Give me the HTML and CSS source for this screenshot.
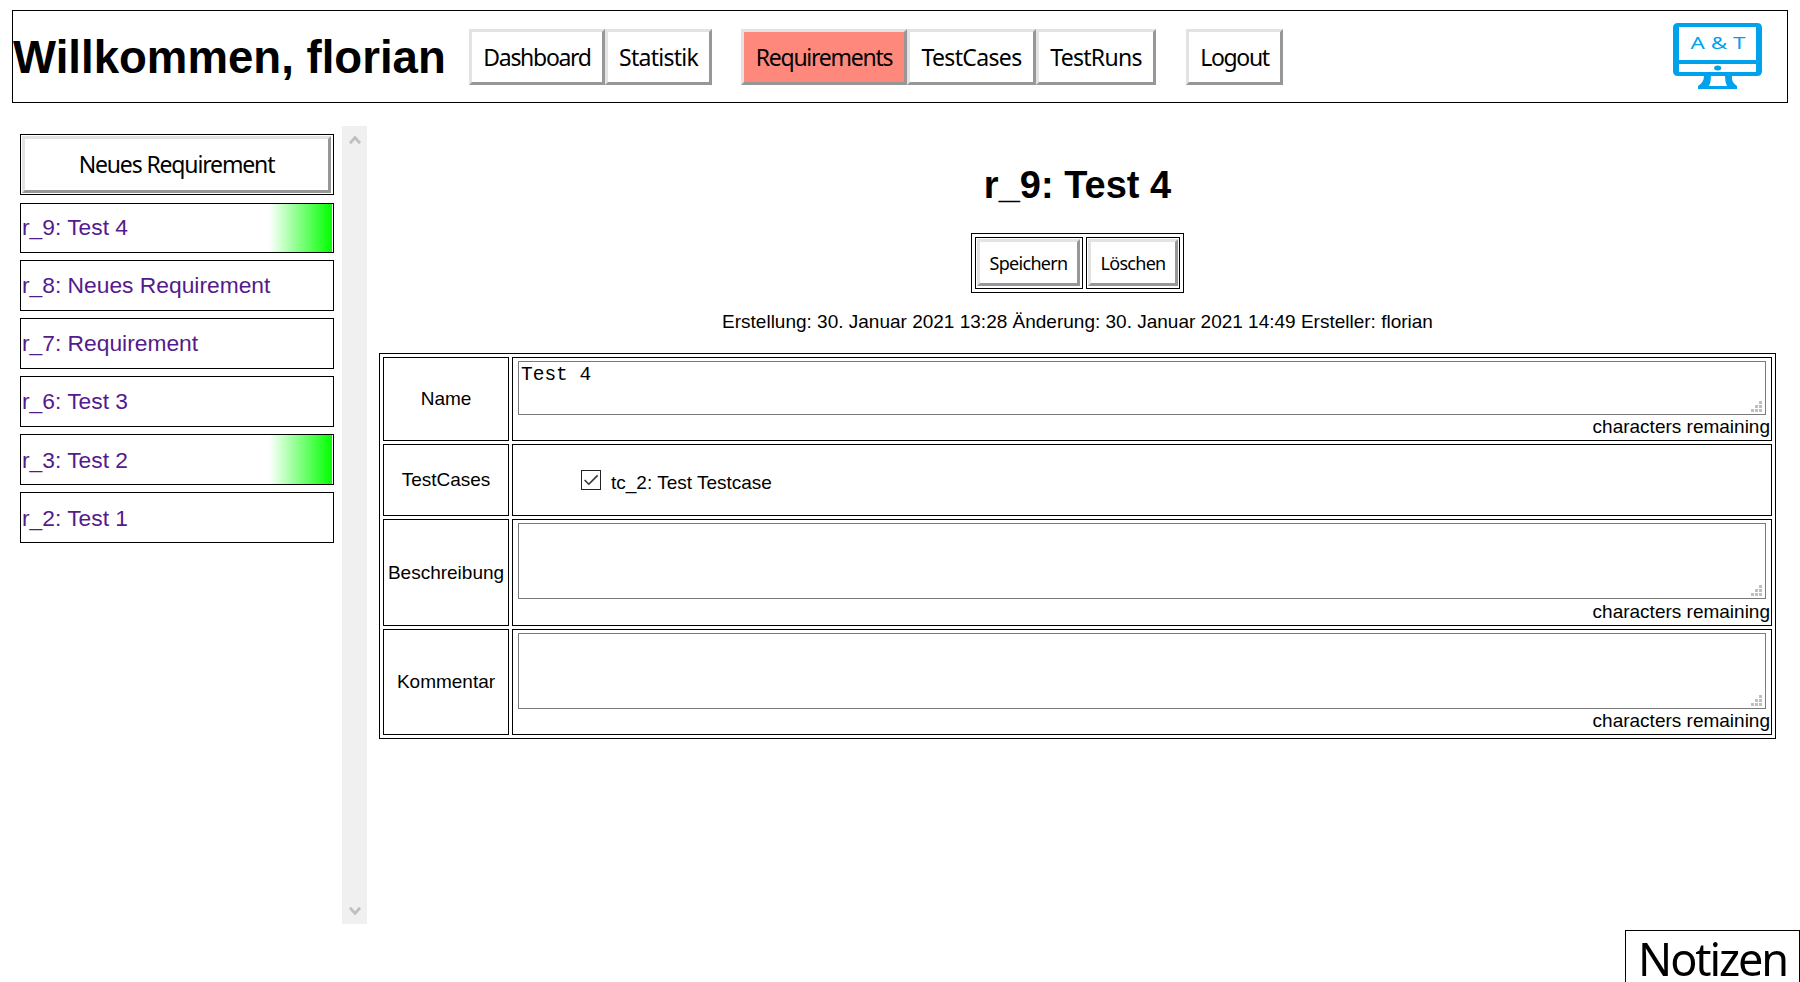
FILE: index.html
```html
<!DOCTYPE html>
<html lang="de">
<head>
<meta charset="utf-8">
<title>Requirements</title>
<link rel="stylesheet" href="styles.css">
</head>
<body>
<header class="topbar">
  <h1 class="welcome">Willkommen, florian</h1>
  <nav class="nav">
    <div class="nav-group"><button class="btn w-dash">Dashboard</button><button class="btn w-stat">Statistik</button></div>
    <div class="nav-group"><button class="btn w-req active">Requirements</button><button class="btn w-cases">TestCases</button><button class="btn w-runs">TestRuns</button></div>
    <div class="nav-group last"><button class="btn w-logout">Logout</button></div>
  </nav>
  <svg class="logo" width="90" height="66" viewBox="0 0 90 66">
    <path fill="#00a2ed" fill-rule="evenodd" d="M5 0H84Q89 0 89 5V48Q89 53 84 53H59Q58 59 64 63V66H25V63Q31 59 31 53H5Q0 53 0 48V5Q0 0 5 0ZM6 4V37H83V4ZM6 41V49H83V41ZM38 53Q38 59 36 63H54Q52 59 52 53Z"/>
    <ellipse cx="44.7" cy="45" rx="3.6" ry="2.5" fill="#00a2ed"/>
    <text class="logo-text" x="17.5" y="26" textLength="55" lengthAdjust="spacingAndGlyphs">A &amp; T</text>
  </svg>
</header>
<div class="content">
  <aside class="sidebar">
    <div class="list">
      <div class="new-box"><button class="btn new-btn">Neues Requirement</button></div>
      <a class="item first done">r_9: Test 4</a>
      <a class="item">r_8: Neues Requirement</a>
      <a class="item">r_7: Requirement</a>
      <a class="item">r_6: Test 3</a>
      <a class="item low done">r_3: Test 2</a>
      <a class="item low">r_2: Test 1</a>
    </div>
    <div class="scrollbar">
      <svg width="12" height="10" viewBox="0 0 12 10"><path d="M1 8.2L6 2.6L11 8.2" fill="none" stroke="#bfbfbf" stroke-width="2.8"/></svg>
      <svg width="12" height="10" viewBox="0 0 12 10"><path d="M1 1.8L6 7.4L11 1.8" fill="none" stroke="#bfbfbf" stroke-width="2.8"/></svg>
    </div>
  </aside>
  <main class="main">
    <h2 class="title">r_9: Test 4</h2>
    <div class="actions">
      <div class="action-cell"><button class="btn small w-save">Speichern</button></div>
      <div class="action-cell tight"><button class="btn small w-del">Löschen</button></div>
    </div>
    <p class="meta">Erstellung: 30. Januar 2021 13:28 Änderung: 30. Januar 2021 14:49 Ersteller: florian</p>
    <div class="form">
      <div class="cell label">Name</div>
      <div class="cell field">
        <div class="area"><textarea class="input short">Test 4</textarea><svg class="grip" width="11" height="11"><path fill="#bfbfbf" d="M8 0h3v3h-3zM4 4h3v3h-3zM8 4h3v3h-3zM0 8h3v3h-3zM4 8h3v3h-3zM8 8h3v3h-3z"/></svg></div>
        <div class="remaining">characters remaining</div>
      </div>
      <div class="cell label">TestCases</div>
      <div class="cell checks">
        <svg class="check" width="20" height="20" viewBox="0 0 20 20"><rect x=".5" y=".5" width="19" height="19" fill="#fff" stroke="#222"/><path d="M3.6 10L7.8 14.2L16.6 5.4" fill="none" stroke="#333" stroke-width="1.6"/></svg>
        <span class="check-label">tc_2: Test Testcase</span>
      </div>
      <div class="cell label">Beschreibung</div>
      <div class="cell field">
        <div class="area"><textarea class="input"></textarea><svg class="grip" width="11" height="11"><path fill="#bfbfbf" d="M8 0h3v3h-3zM4 4h3v3h-3zM8 4h3v3h-3zM0 8h3v3h-3zM4 8h3v3h-3zM8 8h3v3h-3z"/></svg></div>
        <div class="remaining spaced">characters remaining</div>
      </div>
      <div class="cell label">Kommentar</div>
      <div class="cell field">
        <div class="area"><textarea class="input"></textarea><svg class="grip" width="11" height="11"><path fill="#bfbfbf" d="M8 0h3v3h-3zM4 4h3v3h-3zM8 4h3v3h-3zM0 8h3v3h-3zM4 8h3v3h-3zM8 8h3v3h-3z"/></svg></div>
        <div class="remaining">characters remaining</div>
      </div>
    </div>
  </main>
</div>
<div class="notes">Notizen</div>
</body>
</html>
```
FILE: styles.css
```css
* { box-sizing: border-box; }
html, body { height: 100%; overflow: hidden; }
body {
  margin: 0;
  padding: 10px 12px 0;
  background: #fff;
  color: #000;
  font: 19px/22px "Liberation Sans", Arial, sans-serif;
}
.topbar {
  display: flex;
  align-items: flex-start;
  height: 93px;
  border: 1px solid #000;
  padding-right: 24px;
}
.welcome {
  width: 456px;
  margin: 20px 0 0;
  font-size: 45.6px;
  line-height: 54px;
  white-space: nowrap;
}
.nav { display: flex; gap: 29px; margin-top: 18px; }
.nav-group { display: flex; }
.nav-group.last { margin-left: 1px; }
.btn {
  height: 56px;
  padding: 0;
  border: 3px solid;
  border-color: #e3e3e3 #979797 #979797 #e3e3e3;
  background: #fff;
  color: #000;
  font: 23px/48px "Noto Sans", sans-serif;
  letter-spacing: -0.9px;
  white-space: nowrap;
}
.active { background: #ff887c; }
.w-dash { width: 136px; letter-spacing: -1.3px; }
.w-stat { width: 107px; letter-spacing: -0.75px; }
.w-req { width: 166px; letter-spacing: -1.25px; }
.w-cases { width: 129px; letter-spacing: -0.65px; }
.w-runs { width: 120px; letter-spacing: -0.7px; }
.w-logout { width: 97px; letter-spacing: -1.3px; }
.logo { margin: 12px 0 0 auto; }
.logo-text { font: 17px "Noto Sans", sans-serif; fill: #00a2ed; }

.content { display: flex; margin-top: 23px; height: 798px; }
.sidebar { display: flex; width: 355px; }
.list { width: 330px; padding: 8px; }
.new-box { height: 61px; border: 1px solid #000; padding: 1px 2px 1px 1px; }
.new-btn { display: block; width: 100%; height: 57px; letter-spacing: -1.15px; line-height: 46px; padding-bottom: 2px; }
.item {
  display: block;
  height: 51px;
  margin-top: 7px;
  border: 1px solid #000;
  padding: 0 1px;
  color: #551a8b;
  font-size: 22.8px;
  line-height: 49px;
}
.item.first { height: 50px; margin-top: 8px; line-height: 47px; }
.item.low { line-height: 51px; }
.done {
  background: linear-gradient(to right, #fff, #0f0) no-repeat right 1px top 0 / 63px 100%;
}
.scrollbar {
  display: flex;
  flex-direction: column;
  align-items: center;
  justify-content: space-between;
  width: 25px;
  padding: 9px 0 8px;
  background: #f0f0f0;
}
.main { flex: 1; padding: 0 12px; }
.title {
  margin: 38px 0 0;
  font-size: 38px;
  line-height: 42px;
  text-align: center;
}
.actions {
  display: flex;
  gap: 3px;
  width: 213px;
  height: 60px;
  margin: 27px auto 0;
  border: 1px solid #000;
  padding: 3px;
}
.action-cell { height: 52px; border: 1px solid #000; padding: 1px 2px 2px 1px; }
.action-cell.tight { padding-right: 1px; }
.small { display: block; height: 47px; font-size: 18px; line-height: 40px; letter-spacing: -0.7px; }
.w-save { width: 103px; }
.w-del { width: 90px; }
.meta { margin: 18px 0 0; text-align: center; white-space: nowrap; }
.form {
  display: grid;
  grid-template-columns: 126px 1fr;
  grid-template-rows: 84px 72px 107px 106px;
  gap: 3px;
  height: 386px;
  margin-top: 20px;
  border: 1px solid #000;
  padding: 3px;
}
.cell { border: 1px solid #000; }
.label { display: flex; align-items: center; justify-content: center; }
.field { padding: 3px 1px 0 5px; }
.area { position: relative; margin-right: 4px; }
.input {
  display: block;
  width: 100%;
  height: 76px;
  margin: 0;
  border: 1px solid #7a7a7a;
  padding: 2px;
  resize: none;
  font: 19.5px/22px "Liberation Mono", monospace;
  color: #000;
  background: #fff;
}
.input.short { height: 54px; }
.grip { position: absolute; right: 4px; bottom: 3px; }
.remaining { margin-top: 1px; text-align: right; }
.remaining.spaced { margin-top: 2px; }
.checks { display: flex; align-items: flex-start; padding: 25px 0 0 68px; }
.check-label { margin: 2px 0 0 10px; }
.notes {
  position: fixed;
  left: 1625px;
  top: 930px;
  width: 175px;
  height: 52px;
  border: 1px solid #000;
  border-bottom: 0;
  font: 45px/56px "Noto Sans", sans-serif;
  letter-spacing: -2.1px;
  text-align: center;
}
```
